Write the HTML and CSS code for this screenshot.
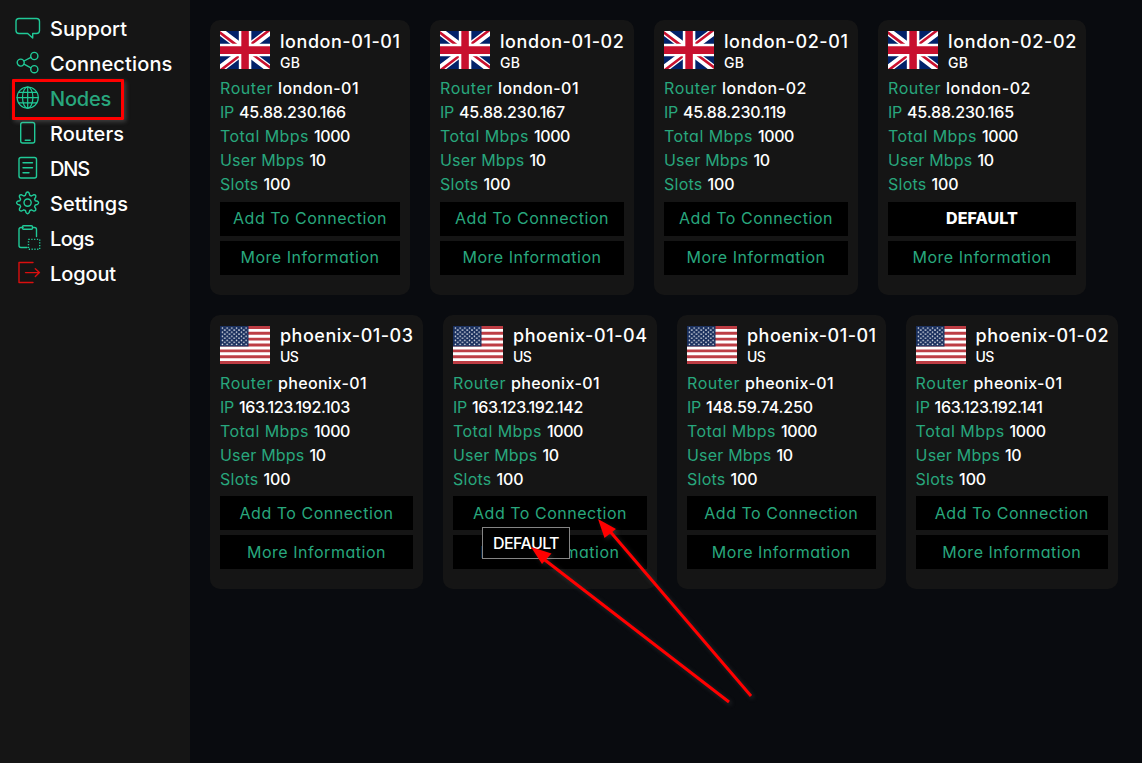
FILE: index.html
```html
<!DOCTYPE html>
<html lang="en">
<head>
<meta charset="utf-8">
<title>Nodes</title>
<link rel="stylesheet" href="styles.css">
</head>
<body>
<svg class="defs" width="0" height="0" aria-hidden="true">
  <defs>
    <symbol id="flag-gb" viewBox="0 0 640 480" preserveAspectRatio="none">
      <path fill="#012169" d="M0 0h640v480H0z"/>
      <path fill="#fff" d="m75 0 244 181L562 0h78v62L400 241l240 178v61h-80L320 301 81 480H0v-60l239-178L0 64V0z"/>
      <path fill="#c8102e" d="m424 281 216 159v40L369 281zm-184 20 6 35L54 480H0zM640 0v3L391 191l2-44L590 0zM0 0l239 176h-60L0 42z"/>
      <path fill="#fff" d="M241 0v480h160V0zM0 160v160h640V160z"/>
      <path fill="#c8102e" d="M0 193v96h640v-96zM273 0v480h96V0z"/>
    </symbol>
    <pattern id="stars" width="60.8" height="51.7" patternUnits="userSpaceOnUse">
      <circle cx="30.4" cy="25.8" r="9.5" fill="#fff"/><circle cx="0" cy="0" r="9.5" fill="#fff"/><circle cx="60.8" cy="0" r="9.5" fill="#fff"/><circle cx="0" cy="51.7" r="9.5" fill="#fff"/><circle cx="60.8" cy="51.7" r="9.5" fill="#fff"/>
    </pattern>
    <symbol id="flag-us" viewBox="0 0 640 480" preserveAspectRatio="none">
      <path fill="#bd3d44" d="M0 0h640v480H0z"/>
      <path stroke="#fff" stroke-width="37" d="M0 55.4h640M0 129.2h640M0 203h640M0 277h640M0 350.8h640M0 424.6h640"/>
      <path fill="#192f5d" d="M0 0h364.8v258.5H0z"/>
      <path fill="url(#stars)" d="M14 12h337v235H14z"/>
    </symbol>
  </defs>
</svg>
<div class="app">
  <nav class="sidebar">
    <a class="item"><svg class="icon" viewBox="0 0 26 26"><path d="M4 3.500h17.500a3 3 0 0 1 3 3v9a3 3 0 0 1-3 3h-3.800v4.600l-5-4.600H4a3 3 0 0 1-3-3v-9a3 3 0 0 1 3-3z"/></svg><span data-fit="77">Support</span></a>
    <a class="item"><svg class="icon" viewBox="0 0 26 26"><circle cx="5.700" cy="12.600" r="3.500"/><circle cx="19.300" cy="6" r="3.600"/><circle cx="19.300" cy="19.200" r="3.600"/><path d="m9 11 6.900-3.600M9 14.200l6.900 3.600"/></svg><span data-fit="122.500">Connections</span></a>
    <a class="item active"><svg class="icon globe" viewBox="0 0 26 26"><circle cx="12.700" cy="12.600" r="10.600"/><ellipse cx="12.700" cy="12.600" rx="5.200" ry="10.600"/><path d="M12.700 2v21M2 12.600h21.200M3.700 7.300h18M3.700 17.900h18"/></svg><span data-fit="61">Nodes</span></a>
    <a class="item"><svg class="icon" viewBox="0 0 26 26"><rect x="5.700" y="2.500" width="14" height="20.500" rx="2"/><path d="M10.200 20.200h5"/></svg><span data-fit="74">Routers</span></a>
    <a class="item"><svg class="icon" viewBox="0 0 26 26"><rect x="4" y="2.500" width="17.500" height="20.500" rx="2"/><path d="M8 7.800h9.500M8 12.800h9.500M8 17.800h6"/></svg><span data-fit="39">DNS</span></a>
    <a class="item"><svg class="icon" viewBox="0 0 26 26"><g transform="translate(-.4 0)"><circle cx="13" cy="12.600" r="3.600"/><path d="M11.500 3q1.500-2 3 0l.7 2.300 1.600.7 2.200-1.200q2.500-.4 2.200 2.100l-1.200 2.200.7 1.600 2.300.6q2 1.500 0 3l-2.300.7-.7 1.600 1.200 2.200q.3 2.500-2.200 2.200l-2.200-1.200-1.600.7-.7 2.200q-1.500 2-3 0l-.7-2.200-1.600-.7L7 21q-2.500.3-2.200-2.200L6 16.600 5.300 15 3 14.300q-2-1.500 0-3l2.300-.6L6 9.100 4.800 6.900Q4.500 4.400 7 4.800L9.200 6l1.600-.7z"/></g></svg><span data-fit="78">Settings</span></a>
    <a class="item"><svg class="icon" viewBox="0 0 26 26"><path d="M8 2.500H6a2 2 0 0 0-2 2v16a2 2 0 0 0 2 2h6M17.500 2.500H19.500a2 2 0 0 1 2 2v7"/><rect x="7.500" y=".8" width="10" height="3.500" rx="1"/><path stroke-linecap="butt" stroke-dasharray="1.250 1.550" d="M13.500 14.400h11.200v9.900H13.500z" class="dots"/></svg><span data-fit="44">Logs</span></a>
    <a class="item logout"><svg class="icon" viewBox="0 0 26 26"><path d="M18 2.500H4v20h14M10.500 12.600h14M20.300 8.700l4.100 3.900-4.100 3.900"/></svg><span data-fit="66">Logout</span></a>
    <div class="highlight"></div>
  </nav>
  <main class="content" id="content"></main>
</div>
<div class="tooltip"><span data-fit="66">DEFAULT</span></div>
<svg class="arrows" viewBox="0 0 1142 763">
  <path class="shaft" d="M729 702 541 557M751 696 608 529"/>
  <path class="head" d="m531 547 20.500 6.500L542 564zM598 519l18 10-11.500 9z"/>
</svg>
<script src="app.js"></script>
</body>
</html>
```
FILE: styles.css
```css
* { box-sizing: border-box; }
body { margin: 0; background: #090b0f; color: #fff; font-family: Inter, "Noto Sans", sans-serif; font-feature-settings: "cv11"; font-size: 16px; font-weight: 450; overflow: hidden; }
.defs { position: absolute; }
.app { display: flex; height: 763px; }
.sidebar { position: relative; width: 190px; flex: none; background: #151515; padding: 12px 0 0 14.500px; }
.item { display: flex; align-items: center; gap: 9.500px; height: 35px; font-size: 20px; line-height: 35px; font-weight: 480; }
.icon { width: 26px; height: 26px; margin-top: -4px; fill: none; stroke: #20c997; stroke-width: 1.4; stroke-linejoin: round; stroke-linecap: round; overflow: visible; }
.globe { stroke-width: 1.2; }
.dots { stroke-linecap: butt; }
.active { color: #28a77d; font-weight: 450; }
.logout .icon { stroke: #d90f0f; }
.highlight { position: absolute; left: 12px; top: 79px; width: 112px; height: 41px; border: 3px solid #f00; border-radius: 1px; box-shadow: 2px 2px 4px rgba(160,160,160,.3); }
[data-fit] { display: inline-block; white-space: nowrap; }
.content { padding: 20px; display: flex; flex-direction: column; gap: 20px; }
.row { display: flex; gap: 20px; }
.card { height: 274.500px; flex: none; background: #151515; border-radius: 10px; padding: 10.500px 10px; }
.head-row { display: flex; gap: 10px; height: 42px; }
.flag { width: 50px; height: 38px; flex: none; }
.name { font-size: 18px; line-height: 22px; height: 22px; white-space: nowrap; }
.country { font-size: 14px; line-height: 20px; }
.facts { margin-top: 3px; }
.fact { display: flex; gap: 5px; height: 24px; line-height: 24px; }
.label, .button { color: #28a77d; font-weight: 430; }
.button { height: 34px; line-height: 33px; background: #000; text-align: center; margin-bottom: 5px; }
.facts + .button { margin-top: 6px; }
.row + .row .flag { margin-top: 1px; }
.row + .row .facts { margin-top: 4px; }
.row + .row .facts + .button { margin-top: 5px; }
.row + .row .button { line-height: 35px; }
.button.default { color: #fff; font-weight: 850; }
.tooltip { position: absolute; left: 482px; top: 527px; width: 88px; height: 32px; background: #000; border: 1px solid #858585; text-align: center; line-height: 31px; }
.arrows { position: absolute; left: 0; top: 0; width: 1142px; height: 763px; pointer-events: none; filter: drop-shadow(2px 2px 2px rgba(130,130,130,.25)); }
.shaft { stroke: #f00; stroke-width: 3; }
.head { fill: #f00; }
```
FILE: app.js
```js
// name, name width, card width, router, router width, ip, ip width
const rows = [
  { cc: 'gb', nodes: [
    ['london-01-01', 120.5, 200, 'london-01', 81, '45.88.230.166', 107],
    ['london-01-02', 124.5, 204, 'london-01', 81, '45.88.230.167', 106],
    ['london-02-01', 124.5, 204, 'london-02', 85, '45.88.230.119', 103],
    ['london-02-02', 129, 208, 'london-02', 85, '45.88.230.165', 107]
  ] },
  { cc: 'us', nodes: [
    ['phoenix-01-03', 133.5, 213, 'pheonix-01', 89, '163.123.192.103', 111],
    ['phoenix-01-04', 134.5, 214, 'pheonix-01', 89, '163.123.192.142', 111],
    ['phoenix-01-01', 129.5, 208.6, 'pheonix-01', 89, '148.59.74.250', 107],
    ['phoenix-01-02', 133.5, 212.4, 'pheonix-01', 89, '163.123.192.141', 108]
  ] }
];

const fact = (label, lw, value, vw) =>
  `<div class="fact"><span class="label" data-fit="${lw}">${label}</span><span data-fit="${vw}">${value}</span></div>`;

const card = (cc, [name, nw, width, router, rw, ip, iw]) => `
  <section class="card" style="width:${width}px">
    <div class="head-row"><svg class="flag"><use href="#flag-${cc}"/></svg>
      <div><div class="name"><span data-fit="${nw}">${name}</span></div><div class="country"><span data-fit="${cc === 'gb' ? 20 : 18}">${cc.toUpperCase()}</span></div></div></div>
    <div class="facts">${fact('Router', 53, router, rw)}${fact('IP', 14, ip, iw)}${fact('Total Mbps', 89, 1000, 36)}${fact('User Mbps', 84.5, 10, 16)}${fact('Slots', 38.5, 100, 27)}</div>
    ${name === 'london-02-02' ? '<div class="button default"><span data-fit="72">DEFAULT</span></div>' : '<div class="button"><span data-fit="154">Add To Connection</span></div>'}
    <div class="button"><span data-fit="139">More Information</span></div>
  </section>`;

document.getElementById('content').innerHTML = rows
  .map(r => `<div class="row">${r.nodes.map(n => card(r.cc, n)).join('')}</div>`).join('');

document.querySelectorAll('[data-fit]').forEach(el => {
  const width = Number(el.dataset.fit);
  const spacing = (width - el.getBoundingClientRect().width) / el.textContent.length;
  el.style.letterSpacing = spacing + 'px';
});
```
